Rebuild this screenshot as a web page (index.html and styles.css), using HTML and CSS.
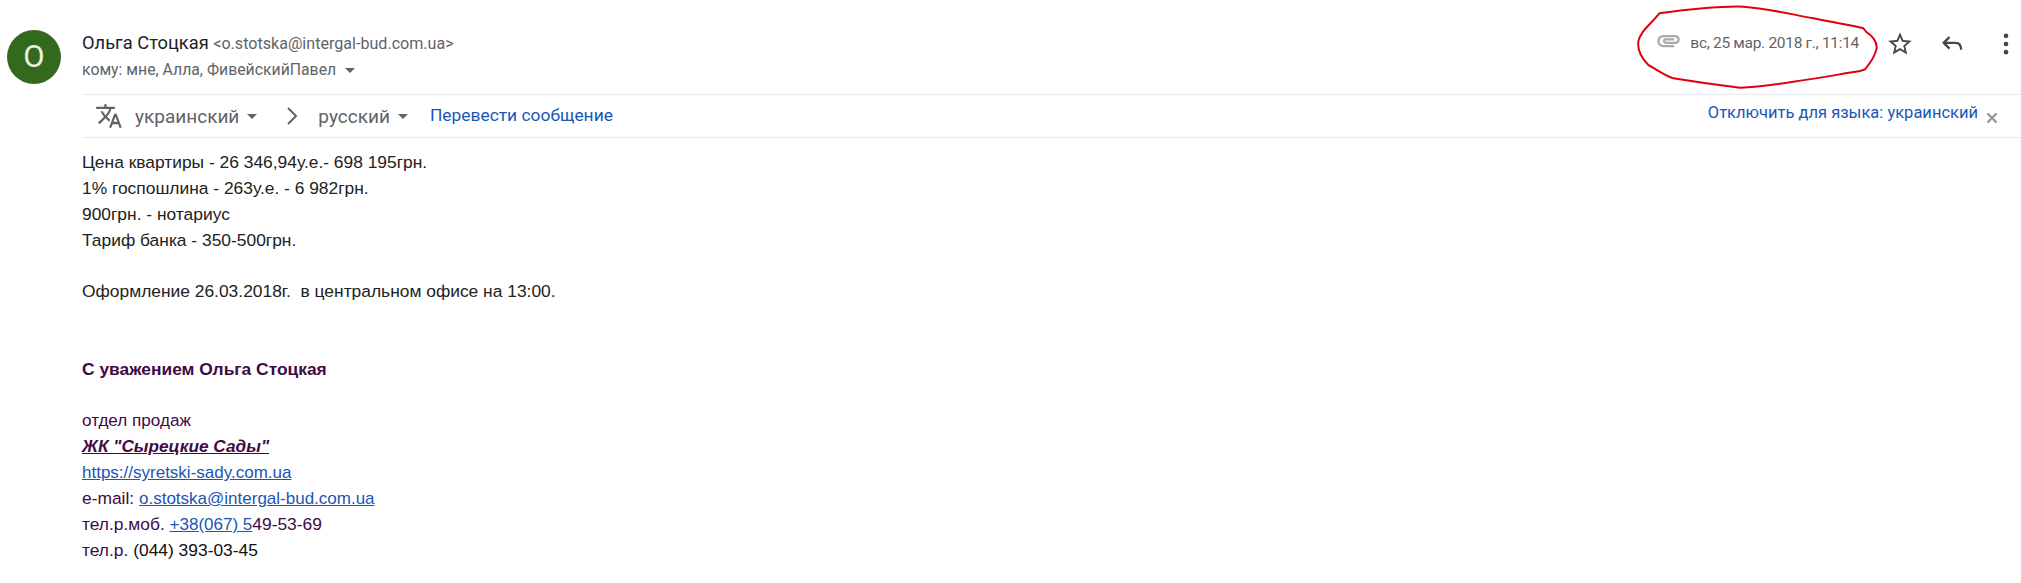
FILE: index.html
```html
<!DOCTYPE html>
<html lang="ru">
<head>
  <meta charset="UTF-8">
  <title>Письмо</title>
  <link rel="stylesheet" href="styles.css">
</head>
<body>
  <div class="message">
    <div class="avatar">О</div>
    <div class="main">
      <div class="header">
        <div class="sender">
          <div class="from"><span class="name">Ольга Стоцкая</span> <span class="email">&lt;o.stotska@intergal-bud.com.ua&gt;</span></div>
          <div class="to">кому: мне, Алла, ФивейскийПавел <span class="caret to-caret"></span></div>
        </div>
        <div class="meta">
          <svg class="clip" viewBox="0 0 24 24"><path d="M2 12.5C2 9.46 4.46 7 7.5 7H18c2.21 0 4 1.79 4 4s-1.79 4-4 4H9.5C8.12 15 7 13.88 7 12.5S8.12 10 9.5 10H17v2H9.41c-.55 0-.55 1 0 1H18c1.1 0 2-.9 2-2s-.9-2-2-2H7.5C5.57 9 4 10.57 4 12.5S5.57 16 7.5 16H17v2H7.5C4.46 18 2 15.54 2 12.5z"/></svg>
          <span class="date">вс, 25 мар. 2018 г., 11:14</span>
          <svg class="icon star" viewBox="0 0 24 24"><path d="M22 9.24l-7.19-.62L12 2 9.19 8.63 2 9.24l5.46 4.73L5.82 21 12 17.27 18.18 21l-1.63-7.03L22 9.24zM12 15.4l-3.76 2.27 1-4.28-3.32-2.88 4.38-.38L12 6.1l1.71 4.04 4.38.38-3.32 2.88 1 4.28L12 15.4z"/></svg>
          <svg class="icon reply" viewBox="0 0 24 24"><path d="M9 6 4 11l5 5M4 11h10c3 0 5 2 5 6"/></svg>
          <svg class="icon more" viewBox="0 0 24 24"><circle cx="12" cy="5" r="2"/><circle cx="12" cy="12" r="2"/><circle cx="12" cy="19" r="2"/></svg>
        </div>
      </div>
      <div class="translate-bar">
        <svg class="translate-icon" viewBox="0 0 24 24"><path d="M12.87 15.07l-2.54-2.51.03-.03c1.74-1.94 2.98-4.17 3.64-6.53H17V4h-7V2H8v2H1v1.99h11.17C11.5 7.92 10.44 9.75 9 11.35 8.07 10.32 7.3 9.19 6.69 8h-2c.73 1.63 1.73 3.17 2.98 4.56l-5.09 5.02L4 19l5-5 3.11 3.11.76-2.04zM18.5 10h-2L12 22h2l1.12-3h4.75L21 22h2l-4.5-12zm-2.62 7l1.62-4.33L19.12 17h-3.24z"/></svg>
        <span class="lang">украинский</span><span class="caret"></span>
        <svg class="chevron" viewBox="0 0 12 20"><path d="M2 2l8 8-8 8"/></svg>
        <span class="lang">русский</span><span class="caret"></span>
        <a class="translate-link">Перевести сообщение</a>
        <a class="disable-link">Отключить для языка: украинский</a>
        <svg class="close" viewBox="0 0 12 12"><path d="M1.5 1.5l9 9M10.5 1.5l-9 9"/></svg>
      </div>
      <div class="body">
        <div>Цена квартиры - 26 346,94у.е.- 698 195грн.</div>
        <div>1% госпошлина - 263у.е. - 6 982грн.</div>
        <div>900грн. - нотариус</div>
        <div>Тариф банка - 350-500грн.</div>
        <div>&nbsp;</div>
        <div>Оформление 26.03.2018г.&nbsp; в центральном офисе на 13:00.</div>
        <div>&nbsp;</div>
        <div>&nbsp;</div>
        <div class="sign"><b>С уважением Ольга Стоцкая</b></div>
        <div>&nbsp;</div>
        <div class="sign small">отдел продаж</div>
        <div class="sign company"><b><i><u>ЖК "Сырецкие Сады"</u></i></b></div>
        <div><a href="#">https://syretski-sady.com.ua</a></div>
        <div class="sign">e-mail: <a href="#">o.stotska@intergal-bud.com.ua</a></div>
        <div class="sign">тел.р.моб. <a href="#">+38(067) 5</a>49-53-69</div>
        <div class="sign">тел.р. <span class="dark">(044) 393-03-45</span></div>
      </div>
    </div>
    <svg class="scribble" viewBox="0 0 1263 450"><path d="M178 40C250 30 350 18 430 20C500 25 560 40 640 55C700 68 750 75 790 85L800 97C815 105 832 125 830 145C825 170 810 190 795 208L780 213C720 222 660 235 580 245C520 255 470 262 420 263C350 255 280 245 220 235C190 225 165 205 145 195C125 175 112 150 115 125C120 95 150 75 178 40Z"/></svg>
  </div>
</body>
</html>
```

FILE: styles.css
```css
* {
  box-sizing: border-box;
}
body {
  margin: 0;
  background: #fff;
  color: #222;
  font-family: Roboto, "Liberation Sans", sans-serif;
  overflow: hidden;
}
.message {
  position: relative;
  display: flex;
  height: 583px;
  padding: 30px 0 0 7px;
}
.avatar {
  flex: none;
  width: 54px;
  height: 54px;
  border-radius: 50%;
  background: #33691e;
  color: #e8f0e0;
  font-size: 31px;
  line-height: 54px;
  text-align: center;
}
.main {
  flex: 1;
  min-width: 0;
  margin-left: 21px;
}
/* header */
.header {
  display: flex;
  justify-content: space-between;
  height: 64px;
}
.from {
  font-size: 18.3px;
  line-height: 26px;
}
.name {
  color: #202124;
}
.email {
  font-size: 16.1px;
  color: #5f6368;
}
.to {
  margin-top: 2px;
  font-size: 15.8px;
  line-height: 22px;
  color: #5f6368;
}
.meta {
  display: flex;
  align-items: flex-start;
}
.clip {
  width: 27px;
  height: 27px;
  margin: -3px 8px 0 0;
  fill: #aaa;
}
.date {
  font-size: 15.5px;
  letter-spacing: -0.3px;
  line-height: 26px;
  color: #5f6368;
}
.icon {
  width: 28px;
  height: 28px;
}
.star {
  margin-left: 27px;
  fill: #444746;
}
.reply {
  margin-left: 25px;
  fill: none;
  stroke: #444746;
  stroke-width: 2;
}
.more {
  margin: 0 1px 0 25px;
  fill: #444746;
}
.caret {
  display: inline-block;
  width: 0;
  height: 0;
  margin-left: 8px;
  border-left: 5px solid transparent;
  border-right: 5px solid transparent;
  border-top: 5px solid #5f6368;
  vertical-align: middle;
}
.to-caret {
  margin-left: 5px;
}
/* translate bar */
.translate-bar {
  display: flex;
  align-items: center;
  height: 44px;
  padding-left: 13px;
  border-top: 1px solid #e8eaed;
  border-bottom: 1px solid #e8eaed;
  color: #5f6368;
  font-size: 19px;
}
.translate-icon {
  width: 28px;
  height: 28px;
  margin-right: 12px;
  fill: #5f6368;
}
.chevron {
  width: 12px;
  height: 20px;
  margin: 0 20px 0 29px;
  fill: none;
  stroke: #5f6368;
  stroke-width: 2;
}
.translate-link {
  margin: -2px 0 0 22px;
  font-size: 17.4px;
  color: #1a56b8;
}
.disable-link {
  margin: -8px 0 0 auto;
  font-size: 16.5px;
  color: #1a56b8;
}
.close {
  width: 12px;
  height: 12px;
  margin: 3px 23px 0 8px;
  fill: none;
  stroke: #999;
  stroke-width: 2.4;
}
/* body */
.body {
  padding-top: 12px;
  font-family: "Liberation Sans", Arial, sans-serif;
  font-size: 17.4px;
  line-height: 25.85px;
  color: #222;
}
.body a {
  font-size: 17px;
  color: #1a56b8;
}
.sign {
  color: #3f0a45;
}
.small {
  font-size: 17.1px;
}
.company {
  font-size: 17.2px;
}
.dark {
  color: #111;
}
/* red circle drawn over the date */
.scribble {
  position: absolute;
  top: 0;
  left: 1600px;
  width: 421px;
  height: 150px;
  fill: none;
  stroke: #e00010;
  stroke-width: 6;
}
```
